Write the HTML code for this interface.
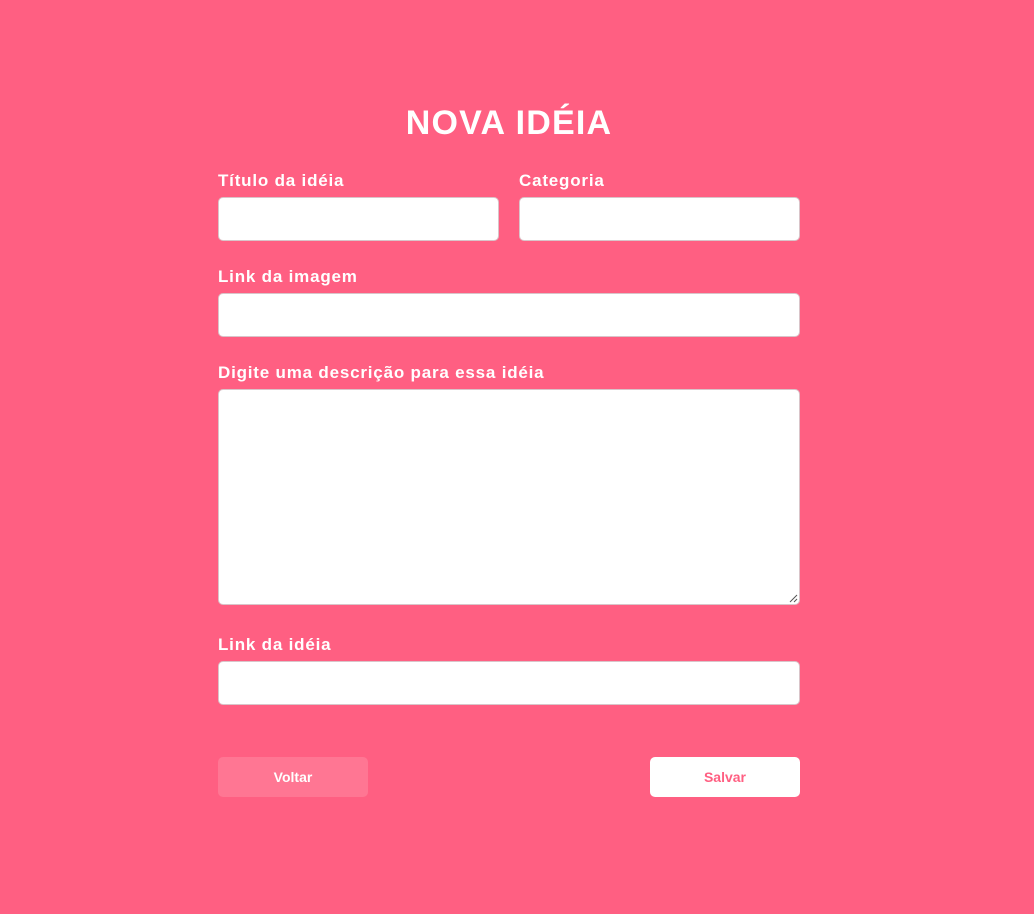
<!DOCTYPE html>
<html><head><meta charset="utf-8"><style>
*{margin:0;padding:0;box-sizing:border-box}
body{width:1034px;height:914px;background:#ff5f82;font-family:"Liberation Sans",sans-serif;position:relative;overflow:hidden}
h1{position:absolute;left:0;width:1018px;text-align:center;top:104px;font-size:34px;color:#fff;font-weight:bold;letter-spacing:1.2px}
.l{position:absolute;color:#fff;font-weight:bold;font-size:17px;letter-spacing:0.8px;line-height:18px}
.i{position:absolute;background:#fff;border:1px solid #d9c4c9;border-radius:5px}
.b{position:absolute;top:757px;height:40px;width:150px;border-radius:5px;font-weight:bold;font-size:14px;text-align:center;line-height:40px}
</style></head><body>
<h1>NOVA IDÉIA</h1>
<div class="l" style="left:218px;top:172px">Título da idéia</div>
<div class="l" style="left:519px;top:172px">Categoria</div>
<div class="i" style="left:218px;top:197px;width:281px;height:44px"></div>
<div class="i" style="left:519px;top:197px;width:281px;height:44px"></div>
<div class="l" style="left:218px;top:268px">Link da imagem</div>
<div class="i" style="left:218px;top:293px;width:582px;height:44px"></div>
<div class="l" style="left:218px;top:364px">Digite uma descrição para essa idéia</div>
<div class="i" style="left:218px;top:389px;width:582px;height:216px"><svg style="position:absolute;right:1px;bottom:1px" width="9" height="9"><path d="M8 1L1 8M8 5L5 8" stroke="#555" stroke-width="1"/></svg></div>
<div class="l" style="left:218px;top:636px">Link da idéia</div>
<div class="i" style="left:218px;top:661px;width:582px;height:44px"></div>
<div class="b" style="left:218px;background:#ff7693;color:#fff">Voltar</div>
<div class="b" style="left:650px;background:#fff;color:#ff5f82">Salvar</div>
</body></html>
